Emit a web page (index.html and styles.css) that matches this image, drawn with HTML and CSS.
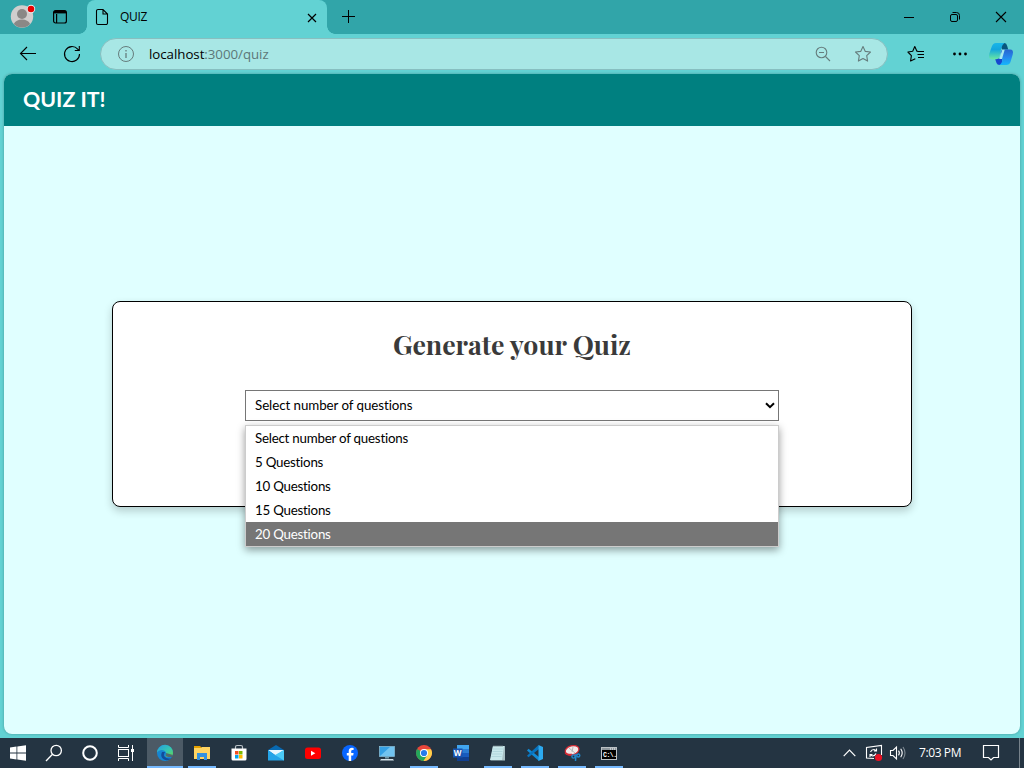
FILE: index.html
```html
<!DOCTYPE html>
<html lang="en">
<head>
<meta charset="utf-8">
<title>QUIZ</title>
<link rel="stylesheet" href="styles.css">
</head>
<body>
<div class="tabstrip">
  <svg class="avatar" width="26" height="26" viewBox="0 0 26 26"><circle cx="12" cy="12.500" r="11.200" fill="#d0cecd"/><circle cx="12" cy="10" r="5" fill="#8a8886"/><path d="M3.800 20Q6 15.500 12 15.500t8.200 4.500A11.200 11.200 0 0 1 3.800 20Z" fill="#8a8886"/><circle cx="21" cy="5" r="4.200" fill="#e6f5f5"/><circle cx="21" cy="5" r="3.300" fill="#e80000"/></svg>
  <svg class="workspaces" width="16" height="16" viewBox="0 0 16 16" fill="none" stroke="#000" stroke-width="1.200"><rect x="1.600" y="1.600" width="12.800" height="12.400" rx="2"/><path d="M1.600 3.600h12.800M4.600 5v9" /><path d="M2 3h12" stroke-width="2.400"/></svg>
  <div class="tab">
    <svg width="14" height="18" viewBox="0 0 14 18" fill="none" stroke="#000" stroke-width="1.100"><path d="M3 1.500h5l4.500 4.500v9a1.500 1.500 0 0 1-1.500 1.500H3A1.500 1.500 0 0 1 1.500 15V3A1.500 1.500 0 0 1 3 1.500ZM8 1.500V6h4.500"/></svg>
    <span class="tab-title">QUIZ</span>
    <svg class="tab-close" width="10" height="10" viewBox="0 0 10 10" stroke="#000" stroke-width="1.200"><path d="m1 1 8 8m0-8-8 8"/></svg>
  </div>
  <svg class="plus" width="14" height="14" viewBox="0 0 14 14" stroke="#000"><path d="M6.500 0v13M0 6.500h13"/></svg>
  <div class="window-buttons">
    <svg width="46" height="34" stroke="#000"><path d="M18 17.500h10"/></svg>
    <svg width="46" height="34" fill="none" stroke="#000"><rect x="18.500" y="14.500" width="7" height="7" rx="1.500"/><path d="M20.500 12.500h4q3 0 3 3v4"/></svg>
    <svg width="46" height="34" stroke="#000" stroke-width="1.100"><path d="m18 12 10 10m0-10L18 22"/></svg>
  </div>
</div>
<div class="toolbar">
  <svg class="back" width="18" height="16" viewBox="0 0 18 16" fill="none" stroke="#000" stroke-width="1.100"><path d="M17 7.500H1.500M8 1 1.500 7.500 8 14"/></svg>
  <svg class="reload" width="18" height="18" viewBox="0 0 18 18" fill="none" stroke="#000" stroke-width="1.100"><path d="M16.500 9A7.500 7.500 0 1 1 14.700 4.200L16 5.500M16.300 1v4.500h-4.500"/></svg>
  <div class="address">
    <svg width="18" height="18" viewBox="0 0 18 18" fill="none" stroke="#667d7d"><circle cx="9" cy="9" r="7.500"/><path d="M9 8v5M9 5v1.500" stroke-width="1.300"/></svg>
    <span class="url"><span class="host">localhost</span>:3000/quiz</span>
    <svg class="magnify" width="16" height="16" viewBox="0 0 16 16" fill="none" stroke="#667d7d" stroke-width="1.100"><circle cx="6.500" cy="6.500" r="5.300"/><path d="M4 6.500h5M10.500 10.500l4.500 4.500"/></svg>
    <svg class="star" width="18" height="18" viewBox="0 0 18 18" fill="none" stroke="#667d7d" stroke-width="1.100" stroke-linejoin="round"><path d="m9 1.500 2.300 4.900 5.200.6-3.800 3.700.9 5.400L9 13.500l-4.600 2.600.9-5.400L1.500 7l5.200-.6Z"/></svg>
  </div>
  <svg class="favorites" width="18" height="18" viewBox="0 0 18 18" fill="none" stroke="#000" stroke-width="1.100" stroke-linejoin="round"><path d="M11 6.400 9.900 6.200 7.800 1.500 5.700 6.200.9 7l3.500 3.700-.8 5.300L8.300 13.700M11 6.500h6M10.500 9.500h6.500M11 12.500h6"/></svg>
  <svg class="dots" width="16" height="6" viewBox="0 0 16 6"><circle cx="2.500" cy="3" r="1.400"/><circle cx="8" cy="3" r="1.400"/><circle cx="13.500" cy="3" r="1.400"/></svg>
  <svg class="copilot" width="26" height="24" viewBox="0 0 26 24">
    <defs><linearGradient id="cp1" x2="0" y2="1"><stop stop-color="#18b6e9"/><stop offset=".4" stop-color="#13a6dd"/><stop offset="1" stop-color="#68e7a4"/></linearGradient><linearGradient id="cp2" x2="0" y2="1"><stop stop-color="#2865cf"/><stop offset=".5" stop-color="#2487ed"/><stop offset="1" stop-color="#14b7fb"/></linearGradient></defs>
    <path d="M12 1h4.500q2 0 2.700 3l1 3.500H14Z" fill="#07567d"/><path d="M14 16.500H7l1.500 4.500q.7 2 3 2h3Z" fill="#1747cf"/>
    <path d="M8 1h8.500q-2 1-3 4.500L11.500 14q-1 3.200-3.500 3.200H4Q.2 17.200 1.200 12L3.700 4.800Q4.800 1 8 1Z" fill="url(#cp1)"/>
    <path d="M12.500 10q.8-2.500 3-2.500H22q4 0 2.700 5L22.500 20q-1 3-4.500 3h-7q2.400-.7 3.300-4.500Z" fill="url(#cp2)"/>
    <path d="M14.300 7.700h2.400L14 17H11.300Z" fill="#a5e9ef"/>
  </svg>
</div>
<div class="page">
  <header class="site-header">QUIZ IT!</header>
  <main class="content">
    <section class="card">
      <h1>Generate your Quiz</h1>
      <div class="select">
        <span class="value">Select number of questions</span>
        <svg width="10" height="7" viewBox="0 0 10 7" fill="none" stroke="#000" stroke-width="2"><path d="m1 1.200 4 4 4-4"/></svg>
        <ul class="options">
          <li>Select number of questions</li>
          <li>5 Questions</li>
          <li>10 Questions</li>
          <li>15 Questions</li>
          <li class="active">20 Questions</li>
        </ul>
      </div>
    </section>
  </main>
</div>
<div class="taskbar">
  <div class="system">
    <div class="item"><svg width="18" height="18" viewBox="0 0 18 18" fill="#fff"><path d="M1 3.500 7.500 2.600v6H1ZM8.300 2.500 17 1.200v7.400H8.300ZM1 9.400h6.500v6L1 14.500ZM8.300 9.400H17v7.400l-8.700-1.300Z"/></svg></div>
    <div class="item"><svg width="18" height="18" viewBox="0 0 18 18" fill="none" stroke="#fff" stroke-width="1.300"><circle cx="11.200" cy="6.500" r="5.200"/><path d="M7.500 10.300 1 17"/></svg></div>
    <div class="item"><svg width="18" height="18" viewBox="0 0 18 18" fill="none" stroke="#fff" stroke-width="2"><circle cx="9" cy="9" r="6.800"/></svg></div>
    <div class="item"><svg width="18" height="18" viewBox="0 0 18 18" fill="none" stroke="#fff"><rect x="1.500" y="5.500" width="10" height="7"/><path d="M1.500 1v2.500h10V1M1.500 17v-2.500h10V17M15.500 1v16"/><path d="M14 5h3v3h-3Z" fill="#fff" stroke="none"/></svg></div>
  </div>
  <div class="apps">
    <div class="item running current"><svg width="18" height="18" viewBox="0 0 18 18"><defs><linearGradient id="eg" y2="1"><stop stop-color="#279be2"/><stop offset=".55" stop-color="#34c6b3"/><stop offset="1" stop-color="#68d84b"/></linearGradient></defs><circle cx="9" cy="9" r="8" fill="#1685d1"/><path d="M1 8.500A8 8 0 0 1 17 9q0 4-4.500 4-3 0-3-1.500 1-1.300.5-3Q9 6 5.500 6 2.500 6 1 8.500Z" fill="url(#eg)"/><path d="M6 8q-2.500 5 2 7.500 4 2 7.500-1.500Q11 15.500 8.500 12.500 7 11 9 8Z" fill="#124c9c"/><path d="M10 9q.6 1.300-.4 2.500.2 1.300 2.900 1.500h3.300L17 11" fill="#515f6c" opacity=".9"/></svg></div>
    <div class="item running"><svg width="18" height="18" viewBox="0 0 18 18"><path d="M1 2h6l2 2H1Z" fill="#e4a000"/><path d="M1 4h7l1-1h8v12H1Z" fill="#ffd461"/><path d="M4 9h10v7h-3v-3H7v3H4Z" fill="#3391df"/></svg></div>
    <div class="item"><svg width="18" height="18" viewBox="0 0 18 18"><path d="M5.500 5V3q0-1.500 1.500-1.500h4q1.500 0 1.500 1.500v2" fill="none" stroke="#bac2c7" stroke-width="1.200"/><path d="M1.500 4.500h15V15q0 1.500-1.500 1.500H3q-1.500 0-1.500-1.500Z" fill="#fff"/><path d="M5 7h3.500v3.500H5Z" fill="#f25022"/><path d="M9 7h3.500v3.500H9Z" fill="#7fba00"/><path d="M5 11h3.500v3.500H5Z" fill="#00a4ef"/><path d="M9 11h3.500v3.500H9Z" fill="#ffb900"/></svg></div>
    <div class="item"><svg width="18" height="18" viewBox="0 0 18 18"><path d="m1 6 8-5 8 5v3H1Z" fill="#0869b1"/><path d="M1 6h16L9 12Z" fill="#e9f8ff"/><path d="m1 6 8 5.500L17 6v10.500H1Z" fill="#24a4e8"/><path d="M17 6v10.500L8 11Z" fill="#4bcaf7"/></svg></div>
    <div class="item"><svg width="18" height="18" viewBox="0 0 18 18"><rect x="1" y="3.500" width="16" height="11.500" rx="2.500" fill="#f00"/><path d="m7 6.800 4.300 2.400L7 11.700Z" fill="#fff"/></svg></div>
    <div class="item"><svg width="18" height="18" viewBox="0 0 18 18"><circle cx="9" cy="9" r="8" fill="#0866ff"/><path d="M7.700 16.900v-5.500H5.800V9h1.900V7.400q0-3.700 3.300-3.700l1.600.2V6h-1.100q-1.300 0-1.300 1.300V9h2.400l-.4 2.400h-2v5.500Z" fill="#fff"/></svg></div>
    <div class="item"><svg width="18" height="18" viewBox="0 0 18 18"><rect x="1.500" y="2.500" width="15" height="10" fill="#35a0e4" stroke="#91c5dc" stroke-width=".7"/><path d="M2 12 12 3h4v9Z" fill="#71c3f0"/><path d="M7 13h4v1.500H7Z" fill="#729aaa"/><path d="M3 15h12l1 1.500H2Z" fill="#d2e0e8"/></svg></div>
    <div class="item running"><svg width="18" height="18" viewBox="0 0 18 18"><circle cx="9" cy="9" r="8" fill="#e8463b"/><path d="M2.100 5A8 8 0 0 0 8.500 17l4-6L9 9Z" fill="#23a75b"/><path d="M9 5.200h7A8 8 0 0 1 8.500 17L12.400 11Z" fill="#ffd04a"/><circle cx="9" cy="9" r="4" fill="#fff"/><circle cx="9" cy="9" r="3.100" fill="#267be9"/></svg></div>
    <div class="item"><svg width="18" height="18" viewBox="0 0 18 18"><path d="M5 1h12v4H5Z" fill="#41a5ee"/><path d="M5 5h12v4H5Z" fill="#2b7cd3"/><path d="M5 9h12v4H5Z" fill="#185abd"/><path d="M5 13h12v4H5Z" fill="#103f91"/><rect x="1" y="4.500" width="9.500" height="9" fill="#1854af"/><text x="5.700" y="12" class="word-w">W</text></svg></div>
    <div class="item running"><svg width="18" height="18" viewBox="0 0 18 18"><path d="M4 2h12v14.500H1.500Z" fill="#a7bfc4"/><path d="M4 2h11l-2 14H1Z" fill="#c8e8ec"/><path d="M4 5h10M3.500 7.500h10M3 10h10M2.500 12.500h10" stroke="#a1cbd3" stroke-width=".6"/><path d="M5 1v2m2-2v2m2-2v2m2-2v2m2-2v2" stroke="#6d7f85" stroke-width=".8"/></svg></div>
    <div class="item running"><svg width="18" height="18" viewBox="0 0 18 18"><path d="M2.500 4.800 13 13v4L1 6.500Z" fill="#128bd5"/><path d="M13 5 2.500 13.300 1 11.700 12.500 1Z" fill="#0873be"/><path d="m12.500 1 4.500 2v12l-4.500 2Z" fill="#2caaf1"/></svg></div>
    <div class="item running"><svg width="18" height="18" viewBox="0 0 18 18"><ellipse cx="9" cy="6.300" rx="7" ry="4.500" transform="rotate(-15 9 6)" fill="#f3e9e9" stroke="#d52b35" stroke-width="1.300"/><path d="M2.300 9q2 2.500 6.500 1.500" fill="none" stroke="#d52b35" stroke-width="2"/><path d="m6 4 6 5M10 3l-1 5" stroke="#a8abb0" stroke-width=".8"/><circle cx="10.500" cy="12.500" r="1.600" fill="none" stroke="#2386cb" stroke-width="1.400"/><circle cx="15.300" cy="11.500" r="1.500" fill="none" stroke="#2386cb" stroke-width="1.400"/><path d="m13 10-.5 7" stroke="#2386cb" stroke-width="1.500"/></svg></div>
    <div class="item running"><svg width="18" height="18" viewBox="0 0 18 18"><rect x="1.500" y="3.500" width="15" height="12" fill="#000" stroke="#bbc1c5"/><path d="M2 4h14v2H2Z" fill="#8d969c"/><path d="M10 5h1m1 0h1m1 0h1" stroke="#fff"/><text x="3" y="12.800" class="prompt">C:\.</text></svg></div>
  </div>
  <div class="tray">
    <svg class="chevron" width="13" height="8" viewBox="0 0 13 8" fill="none" stroke="#fff" stroke-width="1.200"><path d="m.7 7.200 5.800-6 5.800 6"/></svg>
    <svg class="update" width="18" height="18" viewBox="0 0 18 18" fill="none" stroke="#fff" stroke-width="1.100"><path d="M9 14.500 1.500 14V3.500l15-2V11"/><path d="M5.500 8Q6.500 5.500 9 5.500l2 1M11.500 4.500v2.500H9M11 9.500Q10 12 7.500 12l-2-1M5 13v-2.500h2.500"/><circle cx="13.500" cy="13.500" r="3.600" fill="#e81123" stroke="none"/></svg>
    <svg class="volume" width="18" height="16" viewBox="0 0 18 16" fill="none" stroke="#fff" stroke-width="1.100"><path d="M1.500 5.500H4l3.500-3.500v12L4 10.500H1.500ZM9.500 5.700q1.700 2.300 0 4.600M11.700 3.800q3 4.200 0 8.400"/><path d="M14 2q4 6 0 12" stroke="#7d8991"/></svg>
    <span class="clock">7:03 PM</span>
    <svg class="notice" width="18" height="18" viewBox="0 0 18 18" fill="none" stroke="#fff" stroke-width="1.200"><path d="M1.500 1.500h15v12h-5L9 16l-2.500-2.500h-5Z"/></svg>
  </div>
</div>
</body>
</html>
```
FILE: styles.css
```css
* { box-sizing: border-box; }
html, body { height: 100%; }
body {
  margin: 0;
  display: flex;
  flex-direction: column;
  overflow: hidden;
  background: #62d2d3;
  font-family: "Open Sans", sans-serif;
}
svg { display: block; flex: none; }

.tabstrip {
  height: 34px;
  flex: none;
  display: flex;
  align-items: center;
  background: #31a5a9;
}
.avatar { margin: 0 0 0 10px; }
.workspaces { margin-left: 16px; }
.tab {
  position: relative;
  width: 240px;
  height: 34px;
  margin-left: 19px;
  padding: 0 11px 0 8px;
  display: flex;
  align-items: center;
  border-radius: 8px 8px 0 0;
  background: #62d2d3;
}
.tab::before, .tab::after {
  content: "";
  position: absolute;
  bottom: 0;
  width: 8px;
  height: 8px;
}
.tab::before { left: -8px; background: radial-gradient(circle at 0 0, transparent 7.5px, #62d2d3 8px); }
.tab::after { right: -8px; background: radial-gradient(circle at 100% 0, transparent 7.5px, #62d2d3 8px); }
.tab-title { margin-left: 11px; font-size: 12px; line-height: 16px; letter-spacing: -0.3px; }
.tab-close { margin: 1px -0.5px 0 auto; }
.plus { margin-left: 15px; }
.window-buttons { display: flex; margin-left: auto; }

.toolbar {
  height: 40px;
  flex: none;
  display: flex;
  align-items: center;
}
.back { margin-left: 19px; }
.reload { margin-left: 26px; }
.address {
  width: 788px;
  height: 32px;
  margin-left: 19px;
  padding: 0 15px 0 16px;
  display: flex;
  align-items: center;
  border: 1px solid #87bfc0;
  border-radius: 16px;
  background: #a8e7e5;
}
.url { margin-left: 14px; color: #5d7778; font-size: 13.3px; letter-spacing: -0.04px; }
.host { color: #000; }
.magnify { margin-left: auto; }
.star { margin-left: 23px; }
.favorites { margin-left: 19px; }
.dots { margin-left: 27px; }
.copilot { margin-left: 20px; }

.page {
  height: 660px;
  flex: none;
  margin: 0 4px 4px;
  display: flex;
  flex-direction: column;
  overflow: hidden;
  border-radius: 8px;
  background: #e0ffff;
  box-shadow: 0 0 3px #0004;
}
.site-header {
  height: 52px;
  flex: none;
  padding: 0 19px;
  color: #fff;
  background: #008080;
  font: bold 21.33px/51px Lato, sans-serif;
}
.content {
  flex: 1;
  display: flex;
  align-items: center;
  justify-content: center;
  padding-bottom: 52px;
}
.card {
  width: 800px;
  height: 206px;
  padding: 24px 132px 0;
  border: 1px solid #000;
  border-radius: 8px;
  background: #fff;
  box-shadow: 0 4px 8px #0003;
  font-family: Lato, sans-serif;
}
h1 {
  height: 36px;
  margin: 0 0 28px;
  color: #3a3a3a;
  text-align: center;
  font: bold 26.67px/36px "Playfair Display", "Liberation Serif", serif;
}
.select {
  position: relative;
  height: 31px;
  padding: 0 3px 0 9px;
  display: flex;
  align-items: center;
  justify-content: space-between;
  border: 1px solid #767676;
  font-size: 13.33px;
  font-variant-ligatures: none;
}
.value { margin-bottom: 2px; letter-spacing: -0.06px; }
.options {
  position: absolute;
  top: 34px;
  left: -1px;
  width: 534px;
  height: 122px;
  margin: 0;
  padding: 0;
  list-style: none;
  border: 1px solid #ccc;
  background: #fff;
  box-shadow: 0 3px 8px #0006;
  font-size: 13.33px;
  line-height: 24px;
  letter-spacing: -0.23px;
}
.options li { height: 24px; padding-left: 9px; }
.options .active { background: #767676; color: #fff; }

.taskbar {
  height: 30px;
  flex: none;
  display: flex;
  background: #243442;
  color: #fff;
}
.system, .apps { display: flex; }
.apps { margin-left: 3px; gap: 1px; }
.item {
  position: relative;
  width: 36px;
  height: 30px;
  display: flex;
  align-items: center;
  justify-content: center;
}
.running::after {
  content: "";
  position: absolute;
  left: 4px;
  right: 4px;
  bottom: 0;
  height: 2px;
  background: #76b9ff;
}
.current { background: #4c5a66; }
.current::after { left: 0; right: 0; }
.word-w { fill: #fff; font: bold 8px "Open Sans", sans-serif; text-anchor: middle; }
.prompt { fill: #fff; font: bold 6.5px "Liberation Mono", monospace; letter-spacing: -0.5px; }
.tray {
  width: 181px;
  margin-left: auto;
  display: flex;
  align-items: center;
  border-right: 1px solid #77828b;
  margin-right: 4px;
}
.chevron { margin-left: 4px; }
.update { margin-left: 9px; }
.volume { margin-left: 6px; }
.clock { width: 43px; margin: 0 0 1px 12px; font-size: 12px; letter-spacing: -0.4px; white-space: nowrap; }
.notice { margin-left: 20px; }
```
